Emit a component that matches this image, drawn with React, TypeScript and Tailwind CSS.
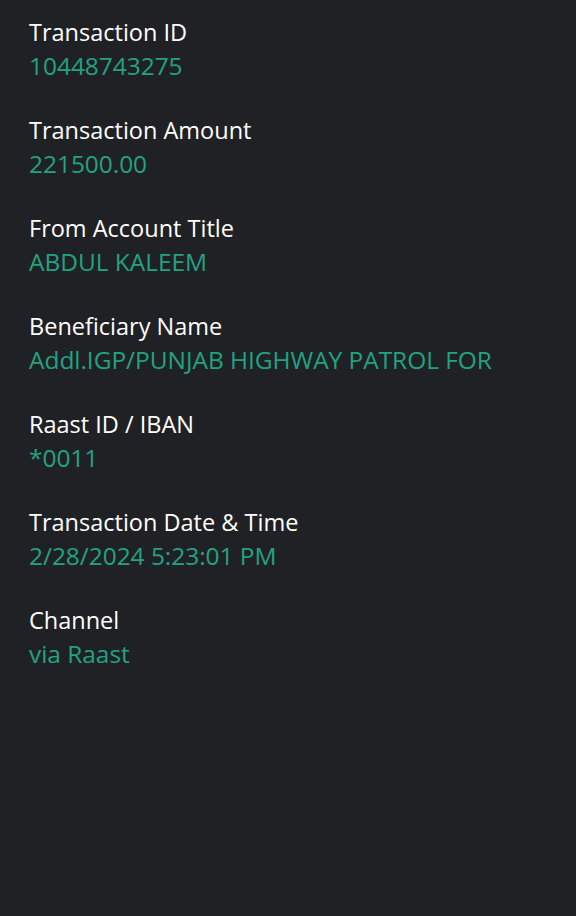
import React from 'react';

const rows: { label: string; value: string }[] = [
  { label: 'Transaction ID', value: '10448743275' },
  { label: 'Transaction Amount', value: '221500.00' },
  { label: 'From Account Title', value: 'ABDUL KALEEM' },
  { label: 'Beneficiary Name', value: 'Addl.IGP/PUNJAB HIGHWAY PATROL FOR' },
  { label: 'Raast ID / IBAN', value: '*0011' },
  { label: 'Transaction Date & Time', value: '2/28/2024 5:23:01 PM' },
  { label: 'Channel', value: 'via Raast' },
];

const App: React.FC = () => {
  return (
    <div className="min-h-[916px] w-[576px] bg-[#202124] pl-[29px] pt-[15px] font-['Open_Sans',sans-serif]">
      <div className="flex flex-col gap-[30px]">
        {rows.map((r) => (
          <div key={r.label} className="flex flex-col">
            <span className="text-[23.5px] leading-[34px] text-white">{r.label}</span>
            <span className="text-[24.5px] leading-[34px] tracking-[-0.05px] text-[#21a383]">{r.value}</span>
          </div>
        ))}
      </div>
    </div>
  );
};

export default App;
